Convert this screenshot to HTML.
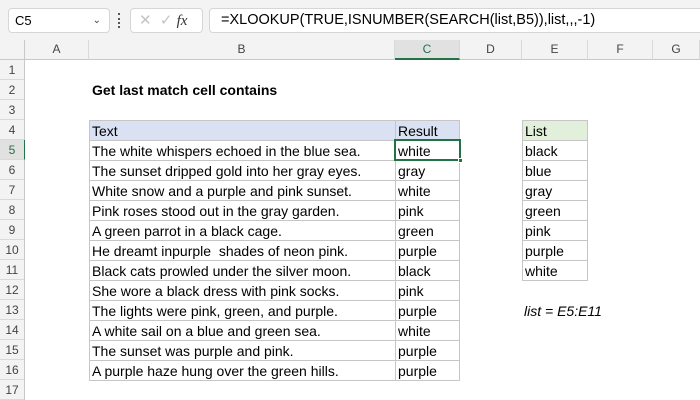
<!DOCTYPE html>
<html><head><meta charset="utf-8"><style>
*{margin:0;padding:0;box-sizing:border-box}
body{width:700px;height:400px;overflow:hidden;background:#fff;font-family:"Liberation Sans",sans-serif;position:relative;color:#000}
.a{position:absolute}
.top{left:0;top:0;width:700px;height:40px;background:#f3f3f3}
.box{background:#fff;border:1px solid #d6d6d6;border-radius:4px}
.ch{top:40px;height:20px;background:#f3f3f3;border-right:1px solid #d9d9d9;border-bottom:1px solid #c8c8c8;font-size:12px;color:#444;text-align:center;line-height:19px}
.rh{left:0;width:25px;height:20px;background:#f3f3f3;border-bottom:1px solid #d9d9d9;border-right:1px solid #c8c8c8;font-size:12px;color:#444;text-align:center;line-height:20px}
.c{height:20px;font-size:14px;line-height:20px;padding-left:2px;white-space:nowrap;border-bottom:1px solid #c6c6c6;border-right:1px solid #c6c6c6;overflow:hidden}
</style></head><body>
<div class="a top"></div>
<div class="a box" style="left:8px;top:8px;width:102px;height:25px;font-size:13px;line-height:23px;padding-left:6px">C5<span style="position:absolute;right:8px;top:0;font-size:10px;color:#444">&#8964;</span></div>
<div class="a" style="left:118px;top:13px;width:2px;height:15px;border-left:2px dotted #555"></div>
<div class="a box" style="left:130px;top:8px;width:73px;height:25px;color:#c4c4c4;font-size:15px;line-height:23px;padding-left:8px">✕ &nbsp;✓ <span style="color:#333;font-family:'Liberation Serif',serif;font-style:italic">fx</span></div>
<div class="a box" style="left:209px;top:8px;width:495px;height:25px;font-size:14.5px;line-height:23px;padding-left:11px">=XLOOKUP(TRUE,ISNUMBER(SEARCH(list,B5)),list,,,-1)</div>
<div class="a" style="left:0;top:40px;width:25px;height:20px;background:#f3f3f3;border-right:1px solid #c8c8c8;border-bottom:1px solid #c8c8c8"></div>
<div class="a ch" style="left:25px;width:64px">A</div>
<div class="a ch" style="left:89px;width:306px">B</div>
<div class="a ch" style="left:395px;width:65px;background:#e1e1e1;border-bottom:2px solid #217346;color:#217346">C</div>
<div class="a ch" style="left:460px;width:62px">D</div>
<div class="a ch" style="left:522px;width:66px">E</div>
<div class="a ch" style="left:588px;width:65px">F</div>
<div class="a ch" style="left:653px;width:47px">G</div>
<div class="a rh" style="top:60px">1</div><div class="a rh" style="top:80px">2</div><div class="a rh" style="top:100px">3</div><div class="a rh" style="top:120px">4</div>
<div class="a rh" style="top:140px;background:#e1e1e1;color:#217346;border-right:1px solid #217346">5</div>
<div class="a rh" style="top:160px">6</div><div class="a rh" style="top:180px">7</div><div class="a rh" style="top:200px">8</div><div class="a rh" style="top:220px">9</div><div class="a rh" style="top:240px">10</div><div class="a rh" style="top:260px">11</div><div class="a rh" style="top:280px">12</div><div class="a rh" style="top:300px">13</div><div class="a rh" style="top:320px">14</div><div class="a rh" style="top:340px">15</div><div class="a rh" style="top:360px">16</div><div class="a rh" style="top:380px">17</div>
<div class="a" style="left:92px;top:82px;font-size:14px;font-weight:bold">Get last match cell contains</div>
<div class="a" style="left:89px;top:120px;width:371px;border-top:1px solid #c6c6c6;border-left:1px solid #c6c6c6">
<div style="display:flex;background:#d9e1f2"><div class="c" style="width:306px">Text</div><div class="c" style="width:64px">Result</div></div>
<div style="display:flex"><div class="c" style="width:306px">The white whispers echoed in the blue sea.</div><div class="c" style="width:64px">white</div></div>
<div style="display:flex"><div class="c" style="width:306px">The sunset dripped gold into her gray eyes.</div><div class="c" style="width:64px">gray</div></div>
<div style="display:flex"><div class="c" style="width:306px">White snow and a purple and pink sunset.</div><div class="c" style="width:64px">white</div></div>
<div style="display:flex"><div class="c" style="width:306px">Pink roses stood out in the gray garden.</div><div class="c" style="width:64px">pink</div></div>
<div style="display:flex"><div class="c" style="width:306px">A green parrot in a black cage.</div><div class="c" style="width:64px">green</div></div>
<div style="display:flex"><div class="c" style="width:306px">He dreamt inpurple &nbsp;shades of neon pink.</div><div class="c" style="width:64px">purple</div></div>
<div style="display:flex"><div class="c" style="width:306px">Black cats prowled under the silver moon.</div><div class="c" style="width:64px">black</div></div>
<div style="display:flex"><div class="c" style="width:306px">She wore a black dress with pink socks.</div><div class="c" style="width:64px">pink</div></div>
<div style="display:flex"><div class="c" style="width:306px">The lights were pink, green, and purple.</div><div class="c" style="width:64px">purple</div></div>
<div style="display:flex"><div class="c" style="width:306px">A white sail on a blue and green sea.</div><div class="c" style="width:64px">white</div></div>
<div style="display:flex"><div class="c" style="width:306px">The sunset was purple and pink.</div><div class="c" style="width:64px">purple</div></div>
<div style="display:flex"><div class="c" style="width:306px">A purple haze hung over the green hills.</div><div class="c" style="width:64px">purple</div></div>
</div>
<div class="a" style="left:394px;top:139px;width:67px;height:22px;border:2px solid #217346"></div>
<div class="a" style="left:458px;top:158px;width:5px;height:5px;background:#217346;border:1px solid #fff"></div>
<div class="a" style="left:522px;top:120px;width:66px;border-top:1px solid #c6c6c6;border-left:1px solid #c6c6c6">
<div class="c" style="background:#e2efda">List</div>
<div class="c">black</div><div class="c">blue</div><div class="c">gray</div><div class="c">green</div><div class="c">pink</div><div class="c">purple</div><div class="c">white</div>
</div>
<div class="a" style="left:524px;top:303px;font-size:14px;font-style:italic">list = E5:E11</div>
</body></html>
